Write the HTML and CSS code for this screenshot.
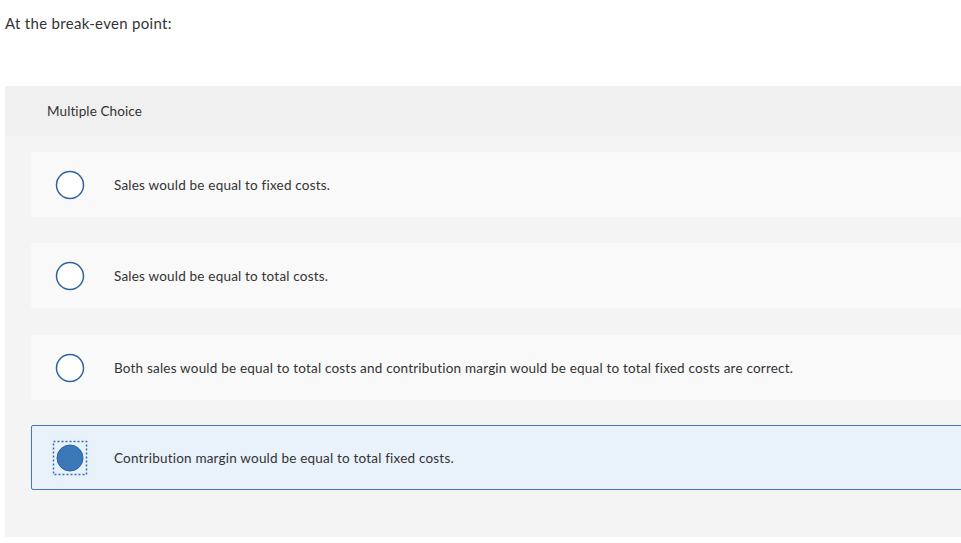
FILE: index.html
```html
<!DOCTYPE html>
<html lang="en">
<head>
<meta charset="utf-8">
<title>Question</title>
<link rel="stylesheet" href="styles.css">
</head>
<body>
<div class="question">
  <p class="prompt">At the break-even point:</p>
  <section class="panel">
    <header class="panel-head">Multiple Choice</header>
    <div class="choices">
      <div class="choice">
        <svg class="radio" width="30" height="30" viewBox="0 0 30 30"><circle cx="15" cy="15" r="13.5" fill="#fff" stroke="#2d649e" stroke-width="1.5"/></svg>
        <span class="label">Sales would be equal to fixed costs.</span>
      </div>
      <div class="choice">
        <svg class="radio" width="30" height="30" viewBox="0 0 30 30"><circle cx="15" cy="15" r="13.5" fill="#fff" stroke="#2d649e" stroke-width="1.5"/></svg>
        <span class="label">Sales would be equal to total costs.</span>
      </div>
      <div class="choice">
        <svg class="radio" width="30" height="30" viewBox="0 0 30 30"><circle cx="15" cy="15" r="13.5" fill="#fff" stroke="#2d649e" stroke-width="1.5"/></svg>
        <span class="label">Both sales would be equal to total costs and contribution margin would be equal to total fixed costs are correct.</span>
      </div>
      <div class="choice selected">
        <svg class="radio" width="30" height="30" viewBox="0 0 30 30"><rect x="-1.5" y="-1.5" width="33" height="33" fill="none" stroke="#2f6fb5" stroke-width="1.5" stroke-dasharray="2 2"/><circle cx="15" cy="15" r="13" fill="#3b78b7" stroke="#2f62a0" stroke-width="1"/></svg>
        <span class="label">Contribution margin would be equal to total fixed costs.</span>
      </div>
    </div>
  </section>
</div>
</body>
</html>
```
FILE: styles.css
```css
html, body {
  margin: 0;
  overflow: hidden;
  background: #fff;
}
body {
  font-family: "Lato", "Open Sans", sans-serif;
  color: #333;
}
.question {
  padding: 0 0 0 5px;
}
.prompt {
  margin: 0;
  padding-top: 13px;
  font-size: 15px;
  letter-spacing: 0.3px;
  line-height: 20px;
  height: 73px;
  color: #333;
}
.panel {
  margin-right: -40px;
  background: #f4f4f4;
  height: 451px;
}
.panel-head {
  height: 50px;
  background: #f0f0f0;
  padding-left: 42px;
  display: flex;
  align-items: center;
  font-size: 13.5px;
  letter-spacing: 0.1px;
  color: #333;
}
.choices {
  display: flex;
  flex-direction: column;
  gap: 26px;
  padding: 16px 0 0 26px;
}
.choice {
  height: 65px;
  box-sizing: border-box;
  background: #f9f9f9;
  display: flex;
  align-items: center;
  padding-left: 24px;
  gap: 29px;
  border-radius: 2px;
}
.choice:nth-child(3) {
  margin-top: 1px;
}
.choice.selected {
  margin-top: -1px;
  background: #e9f1fb;
  border: 1px solid #3d7bc0;
  padding-left: 23px;
}
.radio {
  flex: none;
  overflow: visible;
}
.label {
  font-size: 13.5px;
  letter-spacing: 0.2px;
  color: #333;
}
```
